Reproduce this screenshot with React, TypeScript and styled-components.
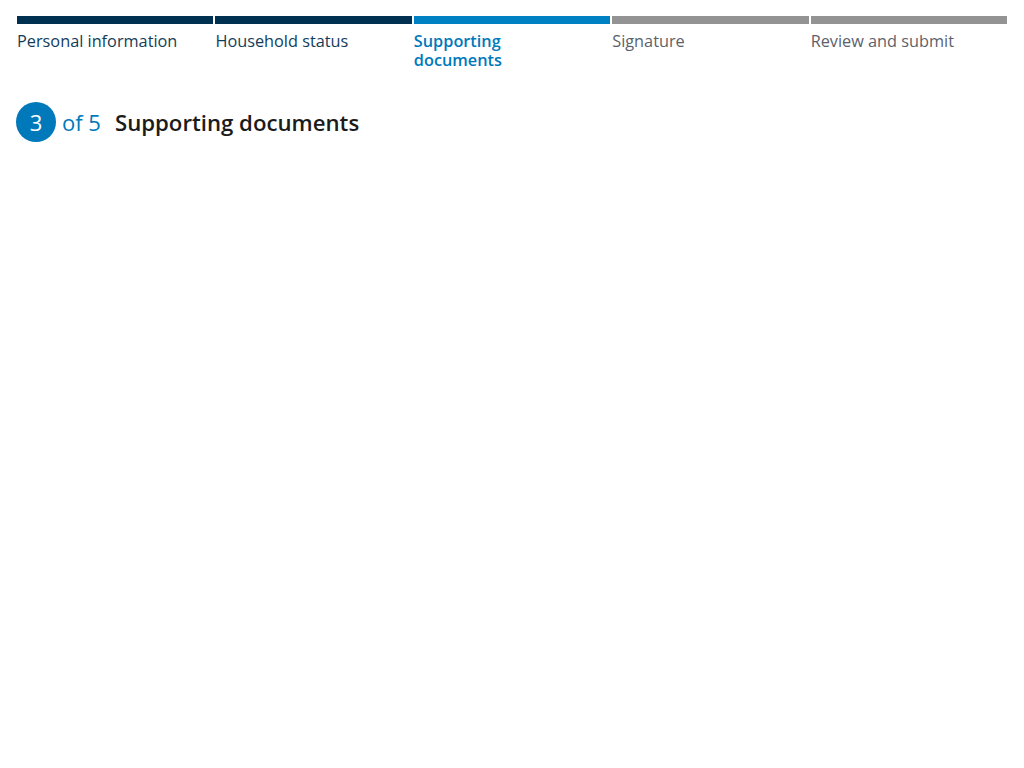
import React from "react";
import styled, { createGlobalStyle } from "styled-components";

const GlobalStyle = createGlobalStyle`
  body {
    margin: 0;
    background: #fff;
    font-family: "Open Sans", "Noto Sans", sans-serif;
  }
`;

const Page = styled.main`
  padding: 16px;
`;

const Steps = styled.ol`
  all: unset;
  display: flex;
  list-style: none;
`;

type StepState = "done" | "current" | "todo";

const barColor: Record<StepState, string> = {
  done: "#003150",
  current: "#0081c4",
  todo: "#939393",
};

const textColor: Record<StepState, string> = {
  done: "#123d5a",
  current: "#0079bb",
  todo: "#5b616b",
};

const Step = styled.li<{ $state: StepState }>`
  flex: 1;
  min-width: 0;
  padding: 0 1px;
  &::before {
    content: "";
    display: block;
    height: 8px;
    background: ${(p) => barColor[p.$state]};
  }
`;

const Label = styled.span<{ $state: StepState }>`
  display: block;
  padding: 8px 28px 0 0;
  font-size: 16.3px;
  line-height: 19px;
  font-weight: ${(p) => (p.$state === "current" ? 600 : 400)};
  color: ${(p) => textColor[p.$state]};
`;

const Heading = styled.h2`
  display: flex;
  align-items: center;
  margin: 32px 0 0;
  font-size: 22px;
  font-weight: 400;
`;

const Circle = styled.span`
  display: inline-flex;
  align-items: center;
  justify-content: center;
  width: 40px;
  height: 40px;
  border-radius: 50%;
  background: #0079bb;
  color: #fff;
  font-size: 22px;
`;

const Of = styled.span`
  margin-left: 6px;
  color: #0079bb;
`;

const Title = styled.span`
  margin-left: 14px;
  font-size: 22.2px;
  font-weight: 600;
  color: #1b1b1b;
`;

const steps: { name: string; state: StepState }[] = [
  { name: "Personal information", state: "done" },
  { name: "Household status", state: "done" },
  { name: "Supporting documents", state: "current" },
  { name: "Signature", state: "todo" },
  { name: "Review and submit", state: "todo" },
];

export default function App() {
  return (
    <Page>
      <GlobalStyle />
      <Steps>
        {steps.map((s) => (
          <Step key={s.name} $state={s.state}>
            <Label $state={s.state}>{s.name}</Label>
          </Step>
        ))}
      </Steps>
      <Heading>
        <Circle>3</Circle>
        <Of>of 5</Of>
        <Title>Supporting documents</Title>
      </Heading>
    </Page>
  );
}
